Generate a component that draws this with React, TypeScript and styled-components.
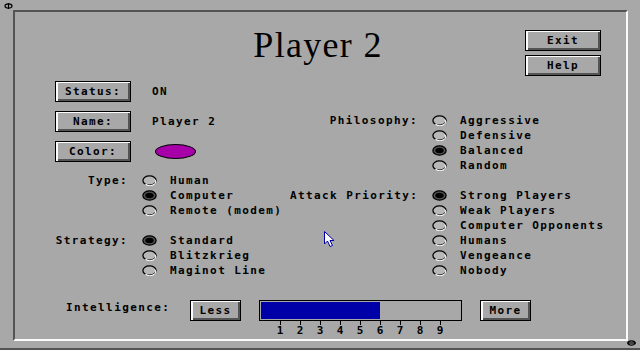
import React from 'react'
import styled, { createGlobalStyle } from 'styled-components'

const GRAY = '#a8a8a8'
const DARK = '#545454'
const LIGHT = '#fcfcfc'
const BLUE = '#0000a8'

const GlobalStyle = createGlobalStyle`
  html, body {
    margin: 0;
    padding: 0;
    background: ${GRAY};
  }
`

const Screen = styled.div`
  position: relative;
  width: 640px;
  height: 350px;
  box-sizing: border-box;
  padding: 10px 12px 0 13px;
  background: ${GRAY};
  border-bottom: 2px solid ${DARK};
  font-family: "DejaVu Sans Mono", "Liberation Mono", monospace;
  font-weight: bold;
  font-size: 11px;
  letter-spacing: 1.4px;
  color: #000;
  overflow: hidden;
`

const Frame = styled.div`
  box-sizing: border-box;
  width: 615px;
  height: 331px;
  display: flex;
  flex-direction: column;
  border-style: solid;
  border-width: 2px;
  border-color: ${DARK} ${LIGHT} ${LIGHT} ${DARK};
`

const Header = styled.div`
  display: grid;
  grid-template-columns: 1fr auto 1fr;
  padding-top: 15px;
`

const Title = styled.h1`
  grid-column: 2;
  margin: 0 5px 0 0;
  font-family: "Liberation Serif", "DejaVu Serif", serif;
  font-weight: normal;
  font-size: 36px;
  line-height: 36px;
  letter-spacing: 1.3px;
`

const ButtonStack = styled.div`
  grid-column: 3;
  justify-self: end;
  display: flex;
  flex-direction: column;
  gap: 4px;
  margin: 3px 25px 0 0;
`

const BevelButton = styled.button<{ $w: number }>`
  box-sizing: border-box;
  width: ${p => p.$w}px;
  height: 21px;
  padding: 0;
  border: 1px solid #000;
  background: ${GRAY};
  box-shadow: inset 2px 1px 0 ${LIGHT}, inset -2px -2px 0 ${DARK};
  font: inherit;
  letter-spacing: inherit;
  color: #000;
  line-height: 18px;
  text-align: center;
`

const Body = styled.div`
  display: grid;
  grid-template-columns: 235px 1fr;
  margin-top: 5px;
  padding-left: 40px;
`

const Column = styled.div`
  display: flex;
  flex-direction: column;
`

const InfoRows = styled.div`
  display: flex;
  flex-direction: column;
  gap: 9px;
`

const InfoRow = styled.div`
  display: flex;
  align-items: center;
  height: 21px;
`

const Value = styled.span`
  margin: -1px 0 0 21px;
`

const ColorSwatch = styled.span<{ $color: string }>`
  box-sizing: border-box;
  width: 41px;
  height: 15px;
  margin-left: 24px;
  border: 1px solid #000;
  border-radius: 50%;
  background: ${p => p.$color};
`

const Group = styled.div<{ $top: number }>`
  display: grid;
  grid-template-columns: auto 1fr;
  margin-top: ${p => p.$top}px;
`

const GroupLabel = styled.div<{ $w: number }>`
  width: ${p => p.$w}px;
  height: 15px;
  line-height: 15px;
  text-align: right;
  white-space: nowrap;
  margin-right: -1px;
`

const Options = styled.div`
  display: flex;
  flex-direction: column;
  padding-left: 15px;
`

const OptionRow = styled.div`
  display: flex;
  align-items: center;
  gap: 13px;
  height: 15px;
  white-space: nowrap;
`

const BottomRow = styled.div`
  display: flex;
  align-items: flex-start;
  margin-top: 22px;
  padding-left: 51px;
`

const SliderLabel = styled.div`
  width: 124px;
  line-height: 16px;
`

const Meter = styled.div`
  display: flex;
  flex-direction: column;
  margin: 0 18px;
`

const Bar = styled.div`
  box-sizing: border-box;
  width: 203px;
  height: 21px;
  padding: 1px;
  border: 1px solid #000;
`

const Fill = styled.div`
  height: 100%;
  background: ${BLUE};
`

const Scale = styled.div`
  display: flex;
  padding-left: 11px;
`

const Tick = styled.div`
  width: 20px;
  display: flex;
  flex-direction: column;
  align-items: center;
  letter-spacing: 0;
  line-height: 10px;

  &::before {
    content: '';
    width: 1px;
    height: 4px;
    margin-bottom: 1px;
    background: #000;
  }
`

const Overlay = styled.svg<{ $x: number; $y: number }>`
  position: absolute;
  left: ${p => p.$x}px;
  top: ${p => p.$y}px;
`

const Radio: React.FC<{ on?: boolean }> = ({ on }) => (
  <svg width="15" height="11" viewBox="0 0 15 11">
    <ellipse cx="7.5" cy="5.5" rx="6.6" ry="4.7" fill={on ? DARK : '#b8b8b8'} stroke="#000" strokeWidth="1.3" />
    {on ? (
      <ellipse cx="7.5" cy="5.5" rx="4.2" ry="2.8" fill="#000" />
    ) : (
      <path d="M12.6 4.6 A5.5 3.6 0 0 1 3.5 9" fill="none" stroke={LIGHT} strokeWidth="1.1" />
    )}
  </svg>
)

const RadioGroup: React.FC<{ label: string; w: number; top: number; options: string[]; value: number }> = ({ label, w, top, options, value }) => (
  <Group $top={top}>
    <GroupLabel $w={w}>{label}</GroupLabel>
    <Options>
      {options.map((o, i) => (
        <OptionRow key={o}>
          <Radio on={i === value} />
          {o}
        </OptionRow>
      ))}
    </Options>
  </Group>
)

const intelligence = 6

const App: React.FC = () => {
  return (
    <>
      <GlobalStyle />
      <Screen>
        <Overlay $x={4} $y={3} width="9" height="6" viewBox="0 0 9 6">
          <ellipse cx="4.5" cy="3" rx="3.5" ry="2.2" fill="none" stroke="#000" strokeWidth="1.2" />
          <line x1="4.5" y1="0" x2="4.5" y2="6" stroke="#000" strokeWidth="1.2" />
        </Overlay>
        <Frame>
          <Header>
            <Title>Player 2</Title>
            <ButtonStack>
              <BevelButton $w={76}>Exit</BevelButton>
              <BevelButton $w={76}>Help</BevelButton>
            </ButtonStack>
          </Header>
          <Body>
            <Column>
              <InfoRows>
                <InfoRow>
                  <BevelButton $w={76}>Status:</BevelButton>
                  <Value>ON</Value>
                </InfoRow>
                <InfoRow>
                  <BevelButton $w={76}>Name:</BevelButton>
                  <Value>Player 2</Value>
                </InfoRow>
                <InfoRow>
                  <BevelButton $w={76}>Color:</BevelButton>
                  <ColorSwatch $color="#a800a8" />
                </InfoRow>
              </InfoRows>
              <RadioGroup label="Type:" w={73} top={11} value={1}
                options={['Human', 'Computer', 'Remote (modem)']} />
              <RadioGroup label="Strategy:" w={73} top={15} value={0}
                options={['Standard', 'Blitzkrieg', 'Maginot Line']} />
            </Column>
            <Column>
              <RadioGroup label="Philosophy:" w={128} top={32} value={2}
                options={['Aggressive', 'Defensive', 'Balanced', 'Random']} />
              <RadioGroup label="Attack Priority:" w={128} top={15} value={0}
                options={['Strong Players', 'Weak Players', 'Computer Opponents', 'Humans', 'Vengeance', 'Nobody']} />
            </Column>
          </Body>
          <BottomRow>
            <SliderLabel>Intelligence:</SliderLabel>
            <BevelButton $w={51}>Less</BevelButton>
            <Meter>
              <Bar>
                <Fill style={{ width: `${intelligence * 10}%` }} />
              </Bar>
              <Scale>
                {[1, 2, 3, 4, 5, 6, 7, 8, 9].map(n => <Tick key={n}>{n}</Tick>)}
              </Scale>
            </Meter>
            <BevelButton $w={51}>More</BevelButton>
          </BottomRow>
        </Frame>
        <Overlay $x={627} $y={340} width="9" height="6" viewBox="0 0 9 6">
          <ellipse cx="4.5" cy="3" rx="3.5" ry="2.2" fill="none" stroke="#000" strokeWidth="1.2" />
          <line x1="0" y1="3" x2="9" y2="3" stroke="#000" strokeWidth="1.2" />
        </Overlay>
        <Overlay $x={324} $y={231} width="12" height="17" viewBox="0 0 12 17">
          <path d="M0.5 0.5 L0.5 13 L3.5 10 L6 15.5 L8.5 14.5 L6 9.5 L10 9.5 Z" fill={LIGHT} stroke={BLUE} />
        </Overlay>
      </Screen>
    </>
  )
}

export default App
